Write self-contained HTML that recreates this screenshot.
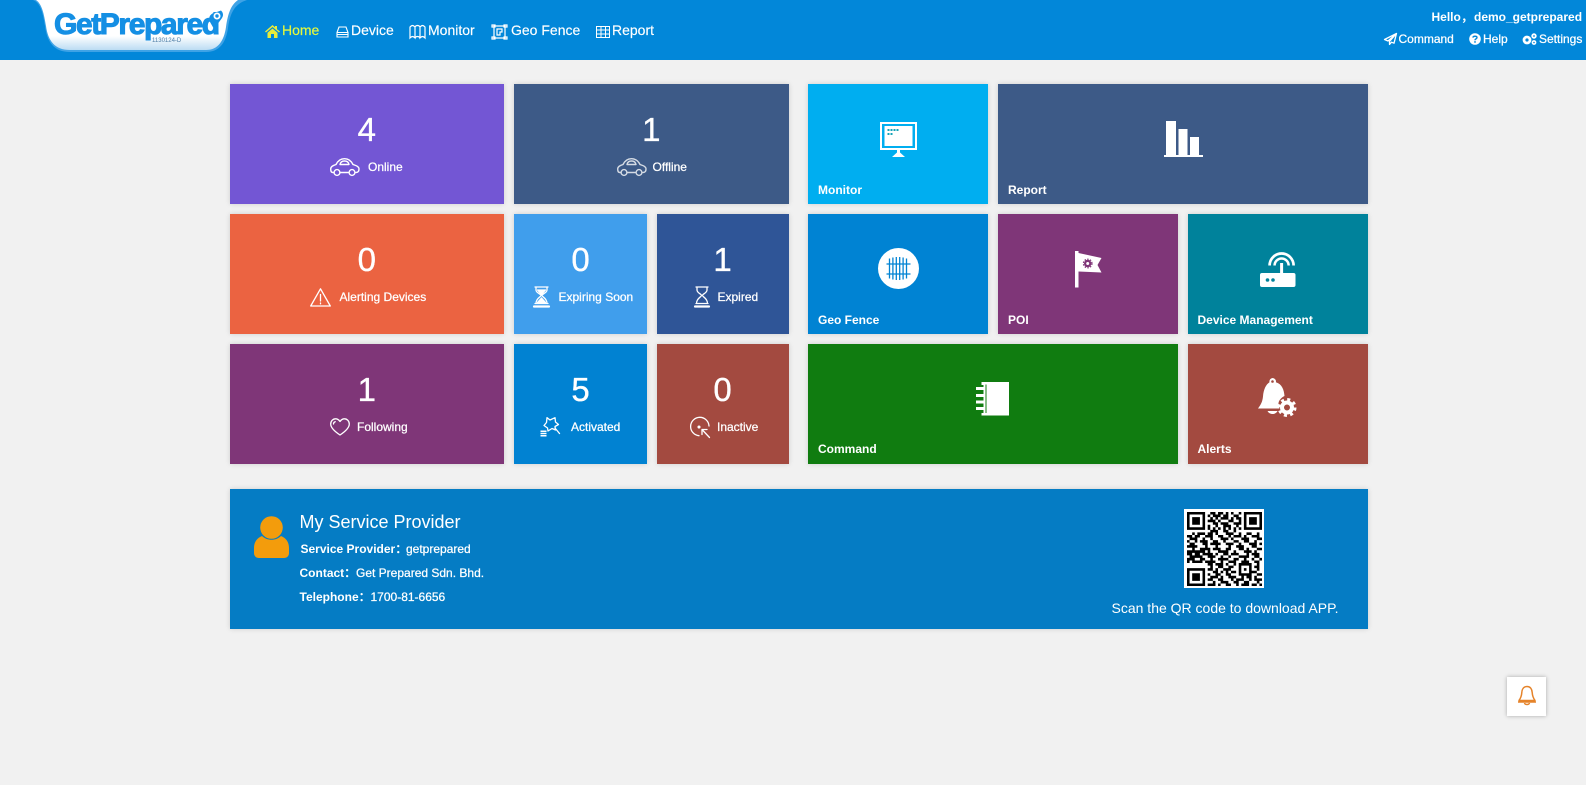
<!DOCTYPE html>
<html><head><meta charset="utf-8"><title>GetPrepared</title>
<style>
html,body{margin:0;padding:0;width:1586px;height:785px;overflow:hidden;background:#f1f1f1;font-family:"Liberation Sans","Noto Sans CJK SC",sans-serif;color:#fff}
.a{position:absolute}
.t{position:absolute;box-shadow:0 0 5px rgba(0,0,0,.14)}
.n{position:absolute;left:0;right:0;top:31px;text-align:center;font-size:33px;line-height:30px;-webkit-text-stroke:.35px #fff}
.l{position:absolute;font-size:12px;line-height:20px;white-space:nowrap;-webkit-text-stroke:.25px #fff}
.b{position:absolute;font-size:12px;font-weight:bold;line-height:20px;white-space:nowrap}
.nav{position:absolute;top:20px;font-size:14px;line-height:20px;white-space:nowrap;-webkit-text-stroke:.15px currentColor}
svg{position:absolute;overflow:visible}
.s{fill:none;stroke:#fff;stroke-width:1.3;stroke-linecap:round;stroke-linejoin:round}
</style></head><body>

<!-- header -->
<div class="a" style="left:0;top:0;width:1586px;height:60px;background:#0287d9"></div>
<svg style="left:0;top:0" width="260" height="60">
<defs><linearGradient id="lg" x1="0" y1="0" x2="0" y2="1"><stop offset="0" stop-color="#fff"/><stop offset=".72" stop-color="#fff"/><stop offset="1" stop-color="#bcdcf3"/></linearGradient></defs>
<path d="M33 0C41 3 43 14 45 26C47 42 54 52 70 52H206C220 52 226 42 228 28C230 14 234 4 247 0Z" fill="#3fa3e6"/>
<path d="M36 0C42 4 44 14 46 26C48 41 55 50 70 50H206C218 50 224 41 226 27C228 13 231 5 238 0Z" fill="url(#lg)"/>
</svg>
<div class="a" style="left:54px;top:7px;font-size:30px;font-weight:bold;letter-spacing:-1.4px;line-height:36px;color:#148fe4;-webkit-text-stroke:1px #148fe4;white-space:nowrap">GetPrepared</div>
<svg style="left:205px;top:9px" width="20" height="24"><path d="M16 1.500A5.500 5.500 0 0 1 17 9L9 20L5 13A6 6 0 0 1 9 4Z" fill="#148fe4"/><circle cx="12" cy="7" r="3.500" fill="#fff"/><circle cx="12" cy="7" r="1.700" fill="#148fe4"/></svg>
<div class="a" style="left:152px;top:37px;font-size:6px;line-height:8px;color:#4d7ea6;white-space:nowrap">1130124-D</div>

<!-- nav -->
<svg style="left:265px;top:25px" width="15" height="13" viewBox="0 0 15 13"><path d="M7.500 0L0 6.500l1 1L7.500 2l6.500 5.500 1-1L12 4.300V1h-2v1.300z" fill="#e9ec3a"/><path d="M2.500 7.800L7.500 3.500l5 4.300V13H9V9H6v4H2.500z" fill="#e9ec3a"/></svg>
<div class="nav" style="left:282px;color:#e6f83c">Home</div>
<svg style="left:336px;top:26px" width="13" height="12" viewBox="0 0 13 12"><path d="M3 1h7l2 5.500V11H1V6.500zM1 6.500h11M1 8.500h11" fill="none" stroke="#fff" stroke-width="1.100"/></svg>
<div class="nav" style="left:351px">Device</div>
<svg style="left:409px;top:24px" width="17" height="15" viewBox="0 0 17 15"><path d="M1 3c2-2 3-2 5 0v11c-2-2-3-2-5 0zM6 3c1-2 4-2 5 0v11c-1-2-4-2-5 0zM11 3c2-2 3-2 5 0v11c-2-2-3-2-5 0z" fill="none" stroke="#fff" stroke-width="1.200"/></svg>
<div class="nav" style="left:428px">Monitor</div>
<svg style="left:491px;top:24px" width="17" height="16" viewBox="0 0 17 16"><path d="M3 2h11v12H3zM1 1h3v2H1zM13 1h3v2h-3zM1 13h3v2H1zM13 13h3v2h-3zM6 5h5v3H9v3H6z" fill="none" stroke="#fff" stroke-width="1.200"/></svg>
<div class="nav" style="left:511px">Geo Fence</div>
<svg style="left:596px;top:26px" width="14" height="12" viewBox="0 0 14 12"><path d="M.5.500h13v11H.5zM.5 4h13M.5 8h13M5 .5v11M9.500.5v11" fill="none" stroke="#fff" stroke-width="1"/></svg>
<div class="nav" style="left:612px">Report</div>

<!-- top right -->
<div class="b" style="left:1431.500px;top:7px">Hello，</div>
<div class="b" style="left:1474px;top:7px">demo_getprepared</div>
<svg style="left:1384px;top:33px" width="13" height="12" viewBox="0 0 13 12"><path d="M12.500.5L.5 6.500l3.500 1.500L12.500.5 5.500 8.500v3l2-2.300 2.500 1z" fill="none" stroke="#fff" stroke-width="1.300" stroke-linejoin="round"/></svg>
<div class="l" style="left:1398.500px;top:29px">Command</div>
<svg style="left:1469px;top:33px" width="12" height="12" viewBox="0 0 12 12"><circle cx="6" cy="6" r="5.800" fill="#fff"/><path d="M4 4.600C4 2.800 8 2.800 8 4.600 8 6 6 5.800 6 7.200" fill="none" stroke="#0287d9" stroke-width="1.400"/><rect x="5.200" y="8.200" width="1.600" height="1.500" fill="#0287d9"/></svg>
<div class="l" style="left:1483px;top:29px">Help</div>
<svg style="left:1522px;top:33px" width="15" height="12" viewBox="0 0 15 12"><circle cx="5" cy="7" r="3" fill="none" stroke="#fff" stroke-width="2.800"/><circle cx="12" cy="3" r="1.800" fill="none" stroke="#fff" stroke-width="1.800"/><circle cx="12" cy="9.500" r="1.600" fill="none" stroke="#fff" stroke-width="1.600"/></svg>
<div class="l" style="left:1539px;top:29px">Settings</div>

<!-- left tiles -->
<div class="t" style="left:229.500px;top:84px;width:274.500px;height:120px;background:#7356d4"><div class="n">4</div></div>
<div class="t" style="left:514px;top:84px;width:274.500px;height:120px;background:#3d5a87"><div class="n">1</div></div>
<div class="t" style="left:229.500px;top:214px;width:274.500px;height:120px;background:#eb6341"><div class="n">0</div></div>
<div class="t" style="left:514px;top:214px;width:133px;height:120px;background:#409eec"><div class="n">0</div></div>
<div class="t" style="left:656.500px;top:214px;width:132px;height:120px;background:#2f5597"><div class="n">1</div></div>
<div class="t" style="left:229.500px;top:344px;width:274.500px;height:120px;background:#7f3678"><div class="n">1</div></div>
<div class="t" style="left:514px;top:344px;width:133px;height:120px;background:#0182d2"><div class="n">5</div></div>
<div class="t" style="left:656.500px;top:344px;width:132px;height:120px;background:#a34a40"><div class="n">0</div></div>

<!-- left labels -->
<svg class="s" style="left:330px;top:157.500px;stroke-width:1.400" width="30" height="18" viewBox="0 0 30 18"><path d="M4 14.500H3C1 14.500 .7 13 .7 11 .7 8.500 3 7.500 6 6.500 8 2.500 11 .7 14.500 .7S21 2.500 23 6.500C26 7.500 29 8.500 29 11c0 2.500-1 3.500-3 3.500M10 14.500h8M10 6.500c.5-2.500 2.500-3.500 4.500-3.500s4 1 4.500 3.500z"/><circle cx="7" cy="14.500" r="2.900"/><circle cx="22" cy="14.500" r="2.900"/></svg>
<div class="l" style="left:368px;top:157px">Online</div>
<svg class="s" style="left:616.500px;top:157.500px;stroke:#d5dbe4;stroke-width:1.400" width="30" height="18" viewBox="0 0 30 18"><path d="M4 14.500H3C1 14.500 .7 13 .7 11 .7 8.500 3 7.500 6 6.500 8 2.500 11 .7 14.500 .7S21 2.500 23 6.500C26 7.500 29 8.500 29 11c0 2.500-1 3.500-3 3.500M10 14.500h8M10 6.500c.5-2.500 2.500-3.500 4.500-3.500s4 1 4.500 3.500z"/><circle cx="7" cy="14.500" r="2.900"/><circle cx="22" cy="14.500" r="2.900"/></svg>
<div class="l" style="left:652.500px;top:157px">Offline</div>

<svg class="s" style="left:309.500px;top:288px" width="21" height="19" viewBox="0 0 21 19"><path d="M10.500 .8L20.300 18H.7z"/><path d="M10.500 6.500v6.500M10.500 15v.8"/></svg>
<div class="l" style="left:339.500px;top:287px">Alerting Devices</div>

<svg class="s" style="left:533px;top:286px" width="17" height="22" viewBox="0 0 17 22"><path d="M2 1h13M2 17.500h13M3 1v3c0 3 5 4 5 5.500S3 12 3 17.500M14 1v3c0 3-5 4-5 5.500s5 2.500 5 8"/><path d="M1 20.500h15" stroke-width="2.200"/><path d="M4.500 4h8L8.500 8.500zM4.500 16.500L8.500 12l4 4.500z" fill="#fff"/></svg>
<div class="l" style="left:558.500px;top:287px">Expiring Soon</div>

<svg class="s" style="left:694px;top:286px" width="16" height="22" viewBox="0 0 16 22"><path d="M2 1h12M2 17.500h12M3 1v3c0 3 4.500 4 4.500 5.500S2.500 12 2.500 17.500M13 1v3c0 3-4.500 4-4.500 5.500s5 2.500 5 8"/><path d="M1 20.500h14" stroke-width="2.200"/></svg>
<div class="l" style="left:717.500px;top:287px">Expired</div>

<svg class="s" style="left:329.500px;top:418px" width="20" height="18" viewBox="0 0 20 18"><path d="M10 17C4 13 .7 9.500 .7 6 .7 3 3 .8 5.500 .8 7.500.8 9 2 10 3.500 11 2 12.500.8 14.500.8 17 .8 19.300 3 19.300 6 19.300 9.500 16 13 10 17zM3.500 6c0-1.200.7-2 1.700-2.300"/></svg>
<div class="l" style="left:357px;top:417px">Following</div>

<svg class="s" style="left:540px;top:417px" width="20" height="20" viewBox="0 0 20 20"><path d="M7 .7l3 2.300 5-2.300.5 4.300 3 2.500-3.500 2 .5 3.500-3.500-1.500L8 14l-.5-3L4 8.500l2.500-3z"/><path d="M15 11l4.500 5.500"/><rect x=".5" y="13.500" width="6" height="6" fill="#fff" stroke="none"/><path d="M.5 15.500h6M.5 17.500h6" stroke="#0182d2" stroke-width=".8"/></svg>
<div class="l" style="left:571px;top:417px">Activated</div>

<svg class="s" style="left:688.500px;top:417px" width="22" height="21" viewBox="0 0 22 21"><path d="M20 9A9.200 9.200 0 1 0 10 18.700"/><circle cx="10" cy="10" r=".9" fill="#fff"/><path d="M13 12.500L20.500 20.500M13 12.500v5M13 12.500h5"/></svg>
<div class="l" style="left:717px;top:417px">Inactive</div>

<!-- right tiles -->
<div class="t" style="left:808px;top:84px;width:180px;height:120px;background:#00aef0"></div>
<div class="t" style="left:998px;top:84px;width:369.500px;height:120px;background:#3d5a87"></div>
<div class="t" style="left:808px;top:214px;width:180px;height:120px;background:#0083d3"></div>
<div class="t" style="left:998px;top:214px;width:179.500px;height:120px;background:#7f3678"></div>
<div class="t" style="left:1187.500px;top:214px;width:180px;height:120px;background:#00829b"></div>
<div class="t" style="left:808px;top:344px;width:369.500px;height:120px;background:#107c10"></div>
<div class="t" style="left:1187.500px;top:344px;width:180px;height:120px;background:#a34a40"></div>

<div class="b" style="left:818px;top:180px">Monitor</div>
<div class="b" style="left:1008px;top:180px">Report</div>
<div class="b" style="left:818px;top:310px">Geo Fence</div>
<div class="b" style="left:1008px;top:310px">POI</div>
<div class="b" style="left:1197.500px;top:310px">Device Management</div>
<div class="b" style="left:818px;top:439px">Command</div>
<div class="b" style="left:1197.500px;top:439px">Alerts</div>

<!-- right icons -->
<svg style="left:880px;top:122px" width="37" height="35" viewBox="0 0 37 35"><path d="M0 0h37v28H0z" fill="#fff"/><path d="M2 2h33v24H2z" fill="#00aef0"/><path d="M4.500 4h28v20h-28z" fill="#fff"/><path d="M7.500 8h2M10.500 8h2M13.500 8h2M16.500 8h2M7.500 12h2M10.500 12h2" stroke="#16a3b8" stroke-width="2"/><path d="M17 28h3v2.500l5 4.500H12l5-4.500z" fill="#fff"/></svg>
<svg style="left:1163.500px;top:121px" width="39" height="36" viewBox="0 0 39 36"><path d="M2 0h10v34H2zM14.500 8h9v26h-9zM26 16h9v18h-9zM0 34h39v2H0z" fill="#fff"/></svg>
<svg style="left:878px;top:248px" width="41" height="41" viewBox="0 0 41 41"><circle cx="20.500" cy="20.500" r="20.500" fill="#fff"/><path d="M11.500 10.500v20M14.900 9.500v22M18.300 9v23M21.700 9v23M25.100 9.500v22M28.500 10.500v20M8.500 16h24M8.500 26h24" stroke="#0083d3" stroke-width="1.300" fill="none"/></svg>
<svg style="left:1074.500px;top:250.500px" width="27" height="37" viewBox="0 0 27 37"><path d="M0 0h3.500v36.500H0z" fill="#fff"/><path d="M3.500 2L26.500 7l-4 7 4 7.500-23-1z" fill="#fff"/><circle cx="12.700" cy="12.500" r="2.600" fill="none" stroke="#7f3678" stroke-width="2.200"/><circle cx="12.700" cy="12.500" r="4.300" fill="none" stroke="#7f3678" stroke-width="1.200" stroke-dasharray="1.500 1.300"/></svg>
<svg style="left:1260px;top:251.500px" width="36" height="36" viewBox="0 0 36 36"><path d="M2 21h31.500a2 2 0 0 1 2 2v10a2 2 0 0 1-2 2H2a2 2 0 0 1-2-2V23a2 2 0 0 1 2-2z" fill="#fff"/><circle cx="7.500" cy="28" r="1.800" fill="#00829b"/><circle cx="13" cy="28" r="1.800" fill="#00829b"/><path d="M21.600 11v10" stroke="#fff" stroke-width="3"/><path d="M9.600 13.500a12 12 0 0 1 24 0" fill="none" stroke="#fff" stroke-width="2.700"/><path d="M14.600 13.500a7 7 0 0 1 14 0" fill="none" stroke="#fff" stroke-width="2.500"/></svg>
<svg style="left:976px;top:381.500px" width="33" height="34" viewBox="0 0 33 34"><path d="M5.500 0H33v33.500H5.500z" fill="#fff"/><path d="M9.500 2.500h1V31h-1z" fill="#107c10"/><path d="M5.500 3h2v28h-2z" fill="#107c10"/><path d="M0 5h8.500v3H0zM0 12h8.500v3H0zM0 18.500h8.500v3H0zM0 25h8.500v3H0z" fill="#fff"/></svg>
<svg style="left:1258px;top:377.500px" width="39" height="41" viewBox="0 0 39 41"><path d="M14.500 0a3.500 3.500 0 0 1 3.400 4.300C24 6 26 12 26.500 18 24 19 21 22 20.500 25c-.2 2 .2 4 1 5.500H0c3-4 4.500-7 5-12 .5-7 3-12 6.500-14.200A3.500 3.500 0 0 1 14.500 0z" fill="#fff"/><circle cx="14.500" cy="3.500" r="1.300" fill="#a34a40"/><path d="M9.500 33h10c-1 2-3 3-5 3s-4-1-5-3z" fill="#fff"/><circle cx="29" cy="29.500" r="5" fill="none" stroke="#fff" stroke-width="4"/><circle cx="29" cy="29.500" r="8" fill="none" stroke="#fff" stroke-width="3" stroke-dasharray="3 3.280"/></svg>

<!-- provider panel -->
<div class="t" style="left:229.500px;top:489px;width:1138px;height:140px;background:#057cc4"></div>
<svg style="left:254px;top:516px" width="35" height="42" viewBox="0 0 35 42"><circle cx="17.500" cy="11.500" r="11.300" fill="#f39c0c"/><path d="M8 20c5 5 14 5 19 0 5 2 8 6 8 12v5c0 3-2 5-5 5H5c-3 0-5-2-5-5v-5c0-6 3-10 8-12z" fill="#f39c0c"/></svg>
<div class="a" style="left:299.500px;top:511px;font-size:18px;line-height:22px;white-space:nowrap">My Service Provider</div>
<div class="b" style="left:300.500px;top:539px">Service Provider：</div><div class="l" style="left:406px;top:539px">getprepared</div>
<div class="b" style="left:299.500px;top:563px">Contact：</div><div class="l" style="left:356px;top:563px">Get Prepared Sdn. Bhd.</div>
<div class="b" style="left:299.500px;top:587px">Telephone：</div><div class="l" style="left:370.500px;top:587px">1700-81-6656</div>

<!-- QR -->
<div class="a" style="left:1184px;top:509px;width:80px;height:79px;background:#fff"></div>
<svg style="left:1186.500px;top:511.500px" width="75" height="74" viewBox="0 0 29 29" preserveAspectRatio="none"><g fill="none" stroke="#000" stroke-width="1"><path d="M.5.500h6v6h-6zM22.500.500h6v6h-6zM.5 22.500h6v6h-6z"/>
<path d="M9 .5h2M12 .5h2M15 .5h1M17 .5h1M20 .5h1M8 1.500h1M10 1.500h3M14 1.500h2M18 1.500h2M9 2.500h1M11 2.500h1M13 2.500h3M17 2.500h1M19 2.500h2M8 3.500h3M12 3.500h1M16 3.500h2M20 3.500h1M10 4.500h2M13 4.500h2M15 4.500h1M18 4.500h3M8 5.500h1M11 5.500h1M14 5.500h3M19 5.500h1M8 6.500h1M10 6.500h1M12 6.500h1M14 6.500h1M16 6.500h1M18 6.500h1M20 6.500h1M9 7.500h3M14 7.500h2M18 7.500h1M2 8.500h1M4 8.500h3M8 8.500h2M11 8.500h1M15 8.500h3M20 8.500h1M23 8.500h2M27 8.500h1M0 9.500h2M3 9.500h2M7 9.500h3M12 9.500h2M16 9.500h1M18 9.500h3M22 9.500h1M25 9.500h3M1 10.500h3M6 10.500h1M9 10.500h1M13 10.500h3M17 10.500h1M21 10.500h3M27 10.500h2M0 11.500h1M3 11.500h1M5 11.500h3M10 11.500h2M14 11.500h1M18 11.500h2M22 11.500h2M26 11.500h1M1 12.500h2M6 12.500h2M9 12.500h4M15 12.500h3M20 12.500h1M24 12.500h3M28 12.500h1M0 13.500h4M7 13.500h1M11 13.500h1M16 13.500h1M19 13.500h3M25 13.500h2M2 14.500h1M5 14.500h4M10 14.500h3M15 14.500h2M20 14.500h2M23 14.500h1M27 14.500h2M0 15.500h7M8 15.500h1M12 15.500h4M18 15.500h1M22 15.500h3M26 15.500h1M0 16.500h2M3 16.500h2M6 16.500h4M11 16.500h1M14 16.500h2M17 16.500h3M23 16.500h1M25 16.500h3M1 17.500h5M8 17.500h3M13 17.500h1M16 17.500h1M20 17.500h4M26 17.500h2M0 18.500h3M5 18.500h2M9 18.500h1M12 18.500h4M18 18.500h2M22 18.500h1M25 18.500h1M28 18.500h1M0 19.500h1M2 19.500h4M7 19.500h4M13 19.500h1M16 19.500h3M21 19.500h3M26 19.500h2M8 20.500h2M11 20.500h3M15 20.500h1M18 20.500h1M20 20.500h5M27 20.500h1M9 21.500h1M12 21.500h2M16 21.500h2M20 21.500h1M24 21.500h1M26 21.500h2M8 22.500h2M11 22.500h1M14 22.500h3M20 22.500h1M22 22.500h1M24 22.500h1M27 22.500h1M10 23.500h2M13 23.500h1M15 23.500h1M17 23.500h2M20 23.500h1M24 23.500h1M25 23.500h2M8 24.500h1M11 24.500h2M15 24.500h2M20 24.500h5M27 24.500h2M9 25.500h3M13 25.500h1M16 25.500h3M21 25.500h1M23 25.500h2M26 25.500h1M8 26.500h2M12 26.500h2M17 26.500h1M19 26.500h3M24 26.500h1M26 26.500h3M10 27.500h1M13 27.500h3M18 27.500h2M22 27.500h2M27 27.500h1M8 28.500h3M12 28.500h1M15 28.500h2M19 28.500h1M21 28.500h3M25 28.500h2M28 28.500h1"/></g>
<path d="M2 2h3v3H2zM24 2h3v3h-3zM2 24h3v3H2z" fill="#000"/></svg>
<div class="a" style="left:1111.500px;top:598px;font-size:14px;line-height:20px;white-space:nowrap">Scan the QR code to download APP.</div>

<!-- bell box -->
<div class="a" style="left:1507px;top:677px;width:39px;height:39px;background:#fff;box-shadow:0 0 4px rgba(0,0,0,.3)"></div>
<svg style="left:1518px;top:685px" width="18" height="22" viewBox="0 0 18 22"><path d="M9 1.500c3.500 0 5 2.800 5.200 6 .2 3.500 1 5.500 2.800 8H1c1.800-2.500 2.600-4.500 2.800-8C4 4.300 5.500 1.500 9 1.500zM0 17h18M6.500 18c.5 2 4.500 2 5 0" fill="none" stroke="#e5832a" stroke-width="1.500" stroke-linejoin="round"/></svg>
</body></html>
